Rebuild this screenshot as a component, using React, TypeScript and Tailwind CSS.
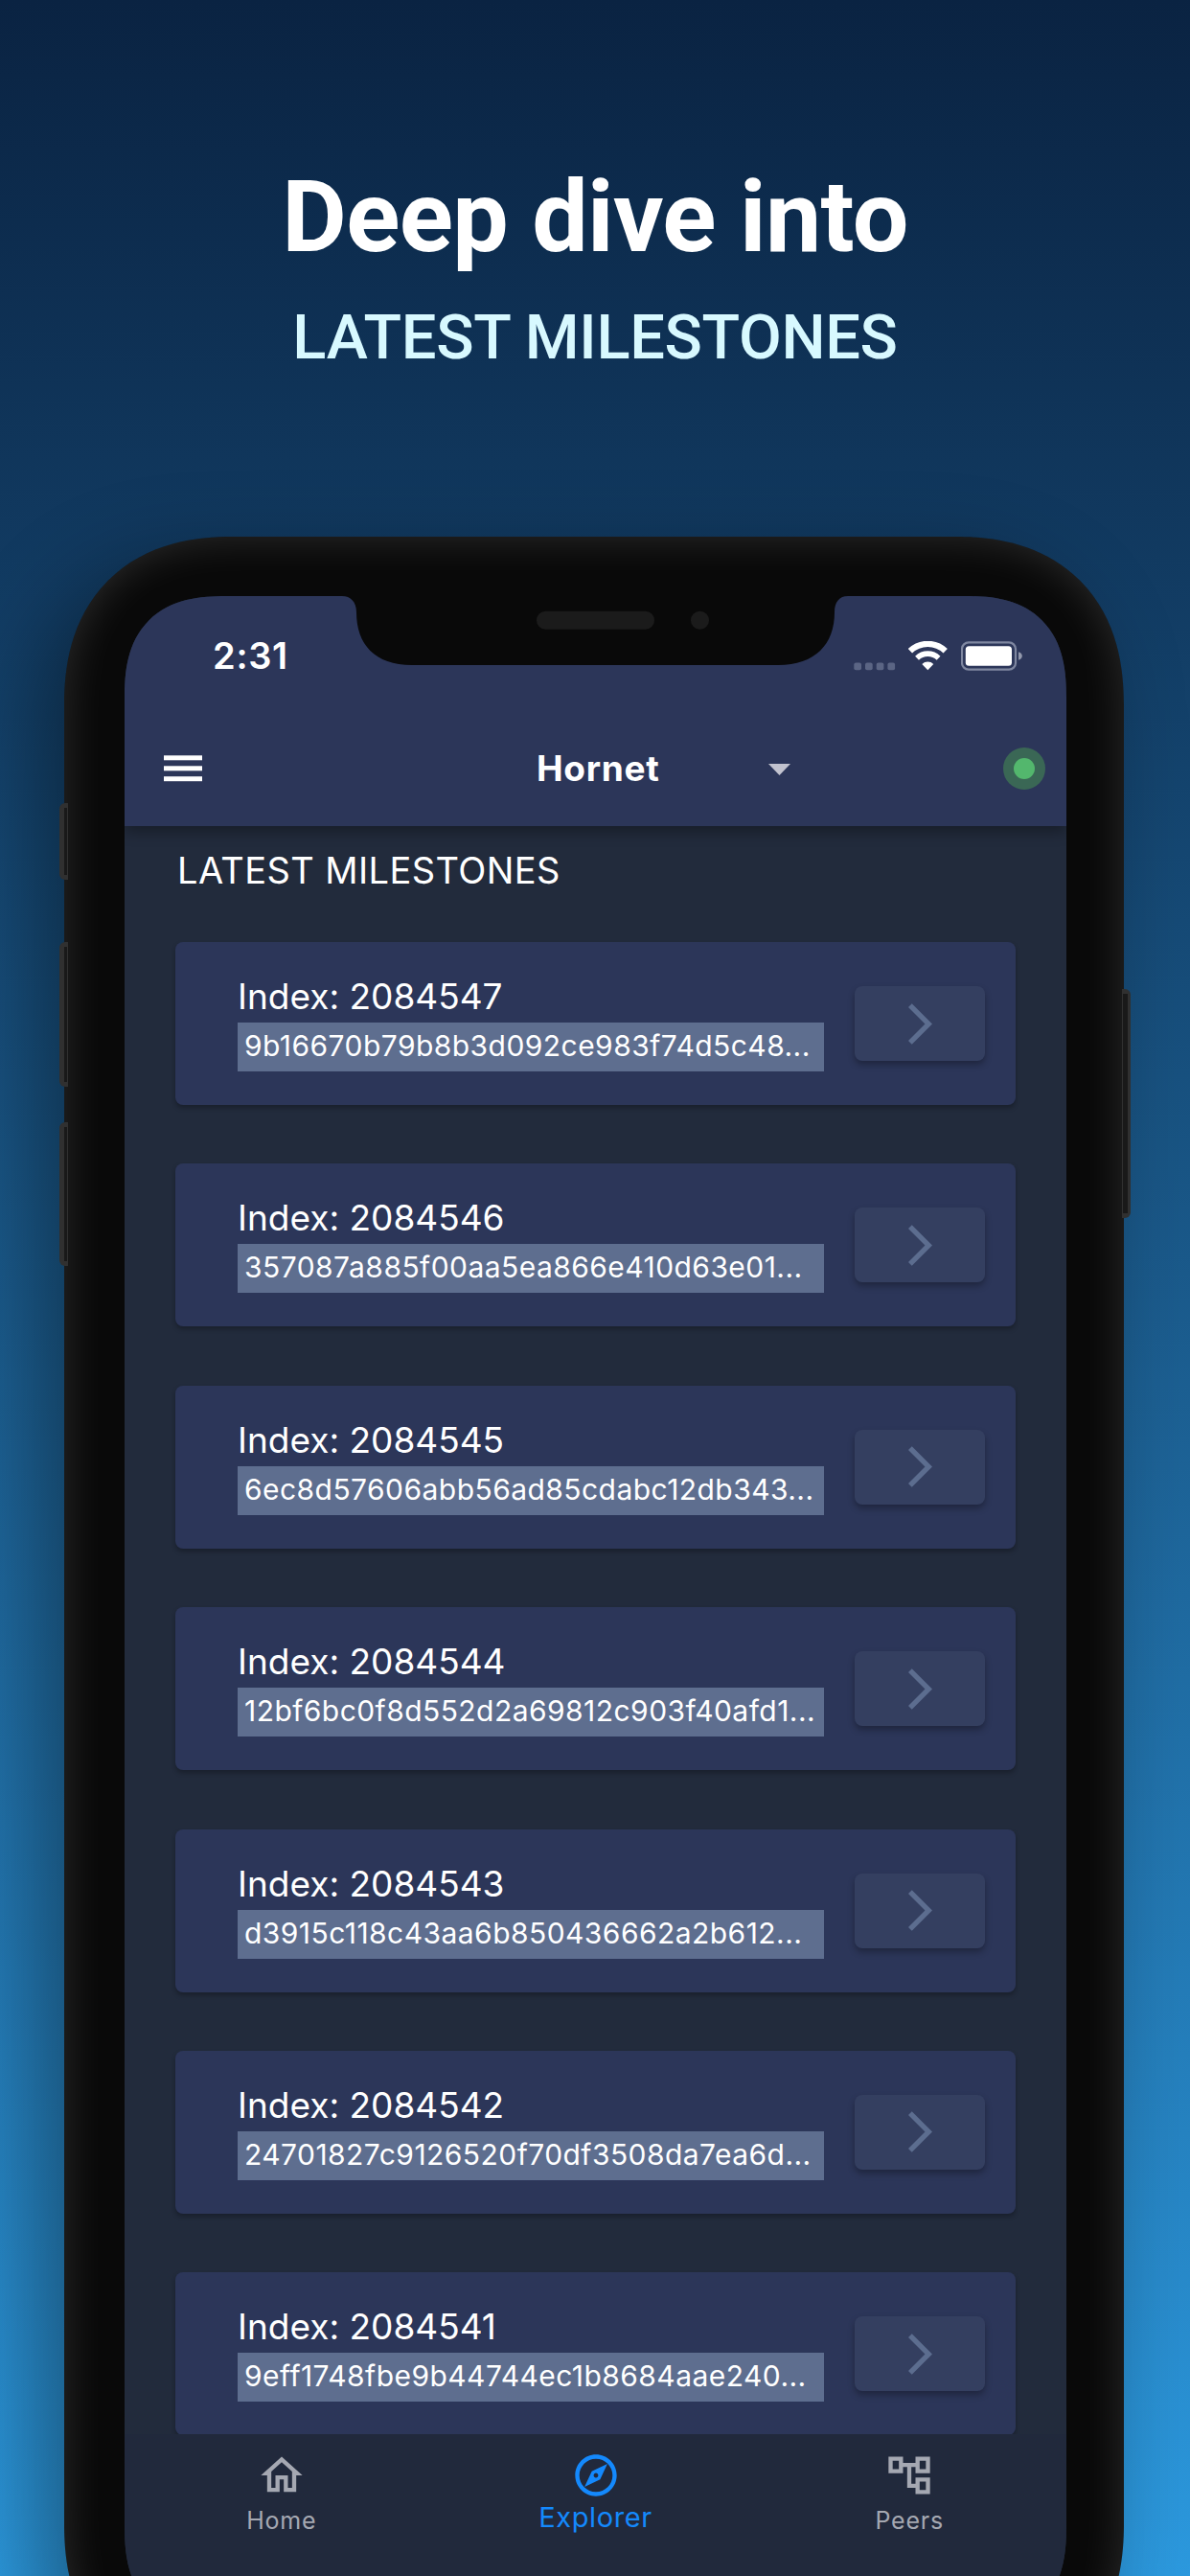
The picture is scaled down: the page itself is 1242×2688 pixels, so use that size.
import type { ReactNode } from "react";

const milestones = [
  { index: 2084547, hash: "9b16670b79b8b3d092ce983f74d5c48..." },
  { index: 2084546, hash: "357087a885f00aa5ea866e410d63e01..." },
  { index: 2084545, hash: "6ec8d57606abb56ad85cdabc12db343..." },
  { index: 2084544, hash: "12bf6bc0f8d552d2a69812c903f40afd1..." },
  { index: 2084543, hash: "d3915c118c43aa6b850436662a2b612..." },
  { index: 2084542, hash: "24701827c9126520f70df3508da7ea6d..." },
  { index: 2084541, hash: "9eff1748fbe9b44744ec1b8684aae240..." },
];

function StatusBar() {
  return (
    <div className="flex h-[124px] shrink-0 items-center justify-between pr-[46px] pl-[92px]">
      <span className="text-[38px] leading-none font-semibold tracking-[0.7px]">2:31</span>
      <div className="flex items-center">
        <svg className="h-[31px] w-[44px]" viewBox="0 0 44 31" fill="#5b6584">
          <rect x="0.3" y="22.5" width="7.7" height="7.7" rx="2" />
          <rect x="12" y="22.5" width="7.7" height="7.7" rx="2" />
          <rect x="23.7" y="22.5" width="7.7" height="7.7" rx="2" />
          <rect x="35.4" y="22.5" width="7.7" height="7.7" rx="2" />
        </svg>
        <svg className="ml-[13px] h-[31px] w-[41px]" viewBox="0 0 41 31" fill="none" stroke="#fff">
          <path d="M1.9 10.3A26.5 26.5 0 0 1 38.7 10.3" strokeWidth="6.2" />
          <path d="M9.05 17.7A16.2 16.2 0 0 1 31.55 17.7" strokeWidth="5.6" />
          <path d="M20.3 30.3L14.3 24A8.5 8.5 0 0 1 26.3 24Z" fill="#fff" stroke="none" />
        </svg>
        <svg className="ml-[14px] h-[31px] w-[64px]" viewBox="0 0 64 31">
          <rect x="1" y="1.3" width="56" height="28.4" rx="7" fill="none" stroke="#7f87a0" strokeWidth="2.2" />
          <rect x="4.8" y="5.2" width="48.2" height="20.6" rx="3.5" fill="#fff" />
          <path d="M60 11.2C62.8 12.2 63.8 13.6 63.8 15.5S62.8 18.8 60 19.8Z" fill="#9298ac" />
        </svg>
      </div>
    </div>
  );
}

function Toolbar() {
  return (
    <div className="flex h-[111px] items-center pr-[22px] pl-[41px]">
      <svg className="h-[28px] w-[40px]" viewBox="0 0 40 28" fill="#fff">
        <rect y="0.3" width="40" height="5" />
        <rect y="11.3" width="40" height="5" />
        <rect y="22.2" width="40" height="5" />
      </svg>
      <span className="ml-[349px] w-[242px] text-[37px] leading-none font-bold tracking-[0.7px]">Hornet</span>
      <svg className="mt-[2px] h-[12px] w-[23px]" viewBox="0 0 23 12" fill="#c2c3cf">
        <path d="M0 0H23L11.5 12Z" />
      </svg>
      <span className="ml-auto flex size-[44px] items-center justify-center rounded-full bg-[#3a6755]">
        <span className="size-[22px] rounded-full bg-[#53b76d]" />
      </span>
    </div>
  );
}

function MilestoneCard({ index, hash }: { index: number; hash: string }) {
  return (
    <div className="flex h-[170px] shrink-0 items-center justify-between rounded-[8px] bg-[#2c3659] pr-8 pl-[65px] shadow-[0_3px_5px_rgba(0,0,0,0.28)]">
      <div className="h-full w-[612px] pt-[31px]">
        <div className="h-[53px] text-[37px] leading-[52px]">Index: {index}</div>
        <div className="h-[51px] bg-[#5e6e8f] pl-[7px] text-[30px] leading-[49px] tracking-[0.45px] whitespace-nowrap">
          {hash}
        </div>
      </div>
      <button className="flex h-[78px] w-[136px] items-center justify-center rounded-[8px] bg-[#343f60] shadow-[0_4px_7px_rgba(0,0,0,0.3)]">
        <svg className="h-[43px] w-[25px]" viewBox="6.23 2 11.77 20" fill="#5c6d8f">
          <path d="M6.23 20.23 8 22l10-10L8 2 6.23 3.77 14.46 12z" />
        </svg>
      </button>
    </div>
  );
}

function NavItem({ active, label, children }: { active?: boolean; label: string; children: ReactNode }) {
  return (
    <div className={active ? "flex flex-1 flex-col items-center text-[#1489fd]" : "flex flex-1 flex-col items-center text-[#a5a8b2]"}>
      <svg className="size-[52px]" viewBox="0 0 24 24" fill="currentColor">
        {children}
      </svg>
      <span className={active ? "text-[29px] leading-[35px] tracking-[0.6px]" : "text-[25px] leading-[42px] tracking-[0.8px]"}>
        {label}
      </span>
    </div>
  );
}

function Notch() {
  return (
    <div className="absolute top-0 left-[227px] z-20 h-[72px] w-[528px]">
      <svg className="h-full w-full" viewBox="0 0 528 72">
        <path d="M0 0C9 0 15 6 15 17C15 50 34 72 73 72H455C494 72 514 50 514 17C514 6 519 0 528 0Z" fill="#090909" />
        <rect x="203" y="15.7" width="123" height="19" rx="9.5" fill="#1b1b1b" />
        <circle cx="373.5" cy="25.2" r="9.5" fill="#1b1b1b" />
      </svg>
    </div>
  );
}

export default function App() {
  return (
    <div className="h-[2688px] w-[1242px] overflow-hidden bg-linear-to-b from-[#0a2342] to-[#2c99de] pt-[175px]">
      <header className="flex h-[385px] flex-col items-center font-['Roboto',sans-serif]">
        <h1 className="text-[104px] leading-none font-bold tracking-[-0.65px] text-white">Deep dive into</h1>
        <h2 className="mt-[41px] text-[65px] leading-none font-medium tracking-[-0.33px] text-[#d8f9ff]">LATEST MILESTONES</h2>
      </header>

      <div className="relative ml-[67px] h-[2250px] w-[1106px] rounded-[176px] bg-[#090909] pt-[62px] pr-[60px] pl-[63px] shadow-[-30px_30px_90px_rgba(0,0,0,0.38),inset_0_0_45px_rgba(255,255,255,0.15)] [corner-shape:superellipse(1.2)]">
        <div className="absolute top-[278px] left-[-5px] h-[80px] w-[9px] rounded-l-[6px] bg-[#303030] py-[5px] pr-px pl-[5px]">
          <div className="h-full bg-[#191919]" />
        </div>
        <div className="absolute top-[423px] left-[-5px] h-[151px] w-[9px] rounded-l-[6px] bg-[#303030] py-[5px] pr-px pl-[5px]">
          <div className="h-full bg-[#191919]" />
        </div>
        <div className="absolute top-[611px] left-[-5px] h-[150px] w-[9px] rounded-l-[6px] bg-[#303030] py-[5px] pr-px pl-[5px]">
          <div className="h-full bg-[#191919]" />
        </div>
        <div className="absolute top-[472px] right-[-7px] h-[239px] w-[9px] rounded-r-[6px] bg-[#303030] py-[5px] pr-[3px] pl-px">
          <div className="h-full bg-[#191919]" />
        </div>

        <div className="relative flex h-[2120px] flex-col overflow-hidden rounded-[106px] bg-[#222b3c] font-['Inter',sans-serif] text-white [corner-shape:superellipse(1.34)]">
          <div className="z-10 h-[240px] shrink-0 bg-[#2c3659] shadow-[0_6px_14px_rgba(0,0,0,0.32)]">
            <StatusBar />
            <Toolbar />
          </div>
          <Notch />

          <main className="flex h-[1678px] shrink-0 flex-col overflow-hidden px-[53px]">
            <h3 className="mb-[29px] h-[92px] shrink-0 pl-[2px] text-[38px] leading-[92px] tracking-[0.4px]">LATEST MILESTONES</h3>
            <div className="flex flex-col gap-[61.4px]">
              {milestones.map((m) => (
                <MilestoneCard key={m.index} index={m.index} hash={m.hash} />
              ))}
            </div>
          </main>

          <nav className="flex flex-1 bg-[#21293c] pt-[17px]">
            <NavItem label="Home">
              <path d="M12 5.69l5 4.5V18h-2v-6H9v6H7v-7.81l5-4.5M12 3L2 12h3v8h6v-6h2v6h6v-8h3L12 3z" />
            </NavItem>
            <NavItem label="Explorer" active>
              <path d="M12 2C6.48 2 2 6.48 2 12s4.48 10 10 10 10-4.48 10-10S17.52 2 12 2zm0 18c-4.41 0-8-3.59-8-8s3.59-8 8-8 8 3.59 8 8-3.59 8-8 8zm-5.5-2.5 7.51-3.49L17.5 6.5 9.99 9.99 6.5 17.5zm5.5-6.6c.61 0 1.1.49 1.1 1.1s-.49 1.1-1.1 1.1-1.1-.49-1.1-1.1.49-1.1 1.1-1.1z" />
            </NavItem>
            <NavItem label="Peers">
              <path d="M22 11V3h-7v3H9V3H2v8h7V8h2v10h4v3h7v-8h-7v3h-2V8h2v3h7zM7 9H4V5h3v4zm10 6h3v4h-3v-4zm0-10h3v4h-3V5z" />
            </NavItem>
          </nav>
        </div>
      </div>
    </div>
  );
}
